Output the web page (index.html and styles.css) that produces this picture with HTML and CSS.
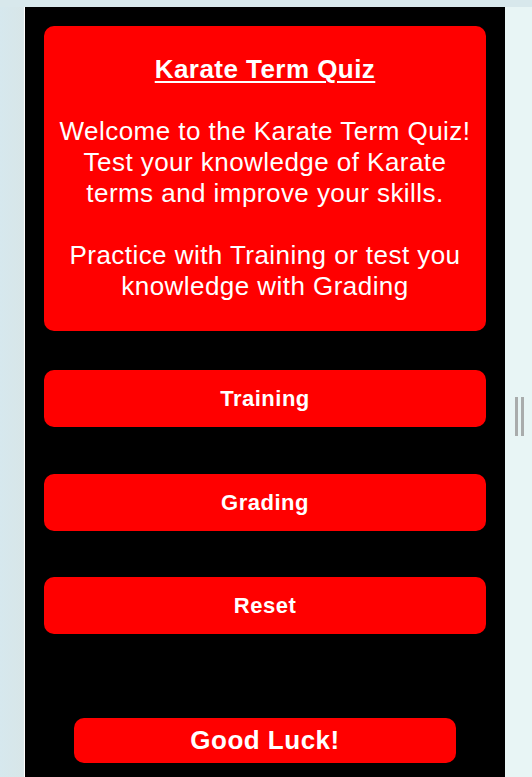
FILE: index.html
```html
<!DOCTYPE html>
<html>
<head>
<meta charset="utf-8">
<link rel="stylesheet" href="styles.css">
</head>
<body>
<div class="top-strip"></div>
<div class="frame">
  <div class="gutter"></div>
  <main class="panel">
    <section class="card">
      <div class="title">Karate Term Quiz</div>
      <div class="blank"></div>
      <p class="text">Welcome to the Karate Term Quiz!<br>Test your knowledge of Karate<br>terms and improve your skills.</p>
      <div class="blank"></div>
      <p class="text">Practice with Training or test you<br>knowledge with Grading</p>
    </section>
    <button class="btn btn-first">Training</button>
    <button class="btn btn-second">Grading</button>
    <button class="btn">Reset</button>
    <div class="luck">Good Luck!</div>
  </main>
  <div class="side">
    <div class="grip"><span></span><span></span></div>
  </div>
</div>
</body>
</html>
```

FILE: styles.css
```css
html, body {
  margin: 0;
  padding: 0;
  height: 100%;
  overflow: hidden;
}
body {
  background: #e8f5f5;
  font-family: "Liberation Sans", Arial, sans-serif;
}
.top-strip {
  height: 7px;
  background: #d8e8ec;
}
.frame {
  display: flex;
  height: 770px;
}
.gutter {
  width: 24px;
  background: linear-gradient(to right, #d6e8ee, #d8e6e8);
  border-right: 1px solid #ffffff;
}
.panel {
  width: 442px;
  padding: 19px 19px 0 19px;
  background: #000;
  display: flex;
  flex-direction: column;
  align-items: center;
}
.card {
  width: 442px;
  box-sizing: border-box;
  background: #ff0000;
  border-radius: 10px;
  padding: 28px 0 29px;
  color: #fff;
  text-align: center;
  font-size: 26px;
  letter-spacing: 0.45px;
  line-height: 31px;
}
.title {
  font-weight: bold;
  text-decoration: underline;
  text-decoration-thickness: 2px;
  text-underline-offset: 3px;
}
.blank {
  height: 31px;
}
.text {
  margin: 0;
}
.btn {
  display: block;
  width: 442px;
  height: 57px;
  border: none;
  border-radius: 10px;
  background: #ff0000;
  color: #fff;
  font-family: "Liberation Sans", Arial, sans-serif;
  font-weight: bold;
  font-size: 22px;
  letter-spacing: 0.5px;
  margin-top: 46px;
  padding: 0;
}
.btn-first {
  margin-top: 39px;
}
.btn-second {
  margin-top: 47px;
}
.luck {
  width: 382px;
  height: 45px;
  margin-top: 84px;
  border-radius: 10px;
  background: #ff0000;
  color: #fff;
  font-weight: bold;
  font-size: 26px;
  letter-spacing: 0.5px;
  line-height: 45px;
  text-align: center;
}
.side {
  flex: 1;
  background: #e8f5f5;
}
.grip {
  display: flex;
  gap: 3px;
  margin: 390px 0 0 10px;
}
.grip span {
  display: block;
  width: 3px;
  height: 39px;
  background: #a9acac;
}
```
